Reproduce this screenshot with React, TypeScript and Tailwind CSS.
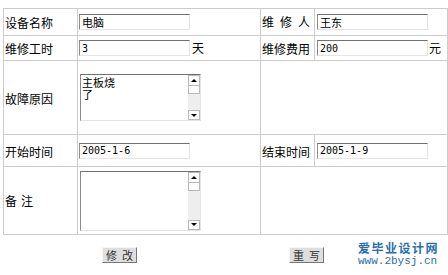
import React from "react";

const cjk = "font-['Noto_Sans_CJK_SC',sans-serif]";
const cell = "border border-[#cccccc] px-[1px] align-middle";

function Field({ value, mono }: { value: string; mono?: boolean }) {
  return (
    <div
      className={`flex h-[16px] w-[111px] items-center border border-t-[#707070] border-l-[#8c8c8c] border-r-[#e4e4e4] border-b-[#e4e4e4] bg-white pl-[2px] text-black ${
        mono ? "font-['DejaVu_Sans_Mono',monospace] text-[10px]" : `${cjk} text-[11px]`
      }`}
    >
      {value}
    </div>
  );
}

function Area({ text, tall }: { text?: string; tall?: boolean }) {
  return (
    <div
      className={`flex w-[121px] border border-t-[#6f6f6f] border-l-[#8a8a8a] border-r-[#e2e2e2] border-b-[#e2e2e2] bg-white ${
        tall ? "h-[60px]" : "h-[47px]"
      }`}
    >
      <div className={`flex-1 whitespace-pre-line pl-[1px] pt-[1px] text-[11px] leading-[12px] text-black ${cjk}`}>{text}</div>
      <div className="flex w-[12px] flex-col bg-[#eeeeee]">
        <div className="flex h-[11px] items-center justify-center border border-[#b8b8b8] bg-white">
          <span className="border-x-[3px] border-b-[3px] border-x-transparent border-b-black" />
        </div>
        <div className="h-[8px] border border-t-0 border-[#b8b8b8] bg-white" />
        <div className="flex-1" />
        <div className="flex h-[10px] items-center justify-center border border-[#b8b8b8] bg-white">
          <span className="border-x-[3px] border-t-[3px] border-x-transparent border-t-black" />
        </div>
      </div>
    </div>
  );
}

function Label({ text }: { text: string }) {
  return <span className={`text-[12px] leading-none text-black ${cjk}`}>{text}</span>;
}

function Spaced({ chars, gap }: { chars: string[]; gap: string }) {
  return (
    <span className={`flex ${gap} text-[12px] leading-none text-black ${cjk}`}>
      {chars.map((c) => (
        <span key={c}>{c}</span>
      ))}
    </span>
  );
}

function Btn({ label }: { label: string[] }) {
  return (
    <button
      className={`flex h-[16px] w-[35px] items-center justify-center gap-[5px] border border-t-[#f6f6f6] border-l-[#f6f6f6] border-r-[#777777] border-b-[#777777] bg-[#dedede] text-[11px] leading-none text-[#333333] ${cjk}`}
    >
      {label.map((c) => (
        <span key={c}>{c}</span>
      ))}
    </button>
  );
}

export default function App() {
  return (
    <div className="relative h-[275px] w-[448px] overflow-hidden bg-white">
      <table className="ml-[3px] mt-[8px] w-[444px] table-fixed border-collapse">
        <colgroup>
          <col className="w-[74px]" />
          <col className="w-[183px]" />
          <col className="w-[54px]" />
          <col className="w-[133px]" />
        </colgroup>
        <tbody>
          <tr className="h-[27px]">
            <td className={cell}>
              <Label text="设备名称" />
            </td>
            <td className={cell}>
              <Field value="电脑" />
            </td>
            <td className={cell}>
              <Spaced chars={["维", "修", "人"]} gap="gap-[6px]" />
            </td>
            <td className={`${cell} pl-[2px]`}>
              <Field value="王东" />
            </td>
          </tr>
          <tr className="h-[21px]">
            <td className={cell}>
              <Label text="维修工时" />
            </td>
            <td className={cell}>
              <div className="flex items-center gap-[2px]">
                <Field value="3" mono />
                <Label text="天" />
              </div>
            </td>
            <td className={cell}>
              <Label text="维修费用" />
            </td>
            <td className={`${cell} pl-[2px]`}>
              <div className="flex items-center gap-[1px]">
                <Field value="200" mono />
                <Label text="元" />
              </div>
            </td>
          </tr>
          <tr className="h-[74px]">
            <td className={cell}>
              <Label text="故障原因" />
            </td>
            <td className={`${cell} pl-[2px]`}>
              <Area text={"主板烧\n了"} />
            </td>
            <td className={cell} colSpan={2} />
          </tr>
          <tr className="h-[32px]">
            <td className={cell}>
              <Label text="开始时间" />
            </td>
            <td className={cell}>
              <Field value="2005-1-6" mono />
            </td>
            <td className={cell}>
              <Label text="结束时间" />
            </td>
            <td className={`${cell} pl-[2px]`}>
              <Field value="2005-1-9" mono />
            </td>
          </tr>
          <tr className="h-[68px]">
            <td className={cell}>
              <Spaced chars={["备", "注"]} gap="gap-[4px]" />
            </td>
            <td className={`${cell} pl-[2px]`}>
              <Area tall />
            </td>
            <td className={cell} colSpan={2} />
          </tr>
        </tbody>
      </table>

      <div className="mt-[12px] flex pl-[102px]">
        <Btn label={["修", "改"]} />
        <div className="ml-[152px]">
          <Btn label={["重", "写"]} />
        </div>
      </div>

      {/* site watermark */}
      <div className="absolute left-[358px] top-[241px] flex flex-col items-start">
        <span className={`h-[14px] text-[12px] font-bold leading-[14px] tracking-[1.5px] text-[#2a6ea8] ${cjk}`}>爱毕业设计网</span>
        <span className="mt-[1px] font-['Liberation_Mono',monospace] text-[11px] leading-[11px] text-[#2a6ea8]">www.2bysj.cn</span>
      </div>
    </div>
  );
}
